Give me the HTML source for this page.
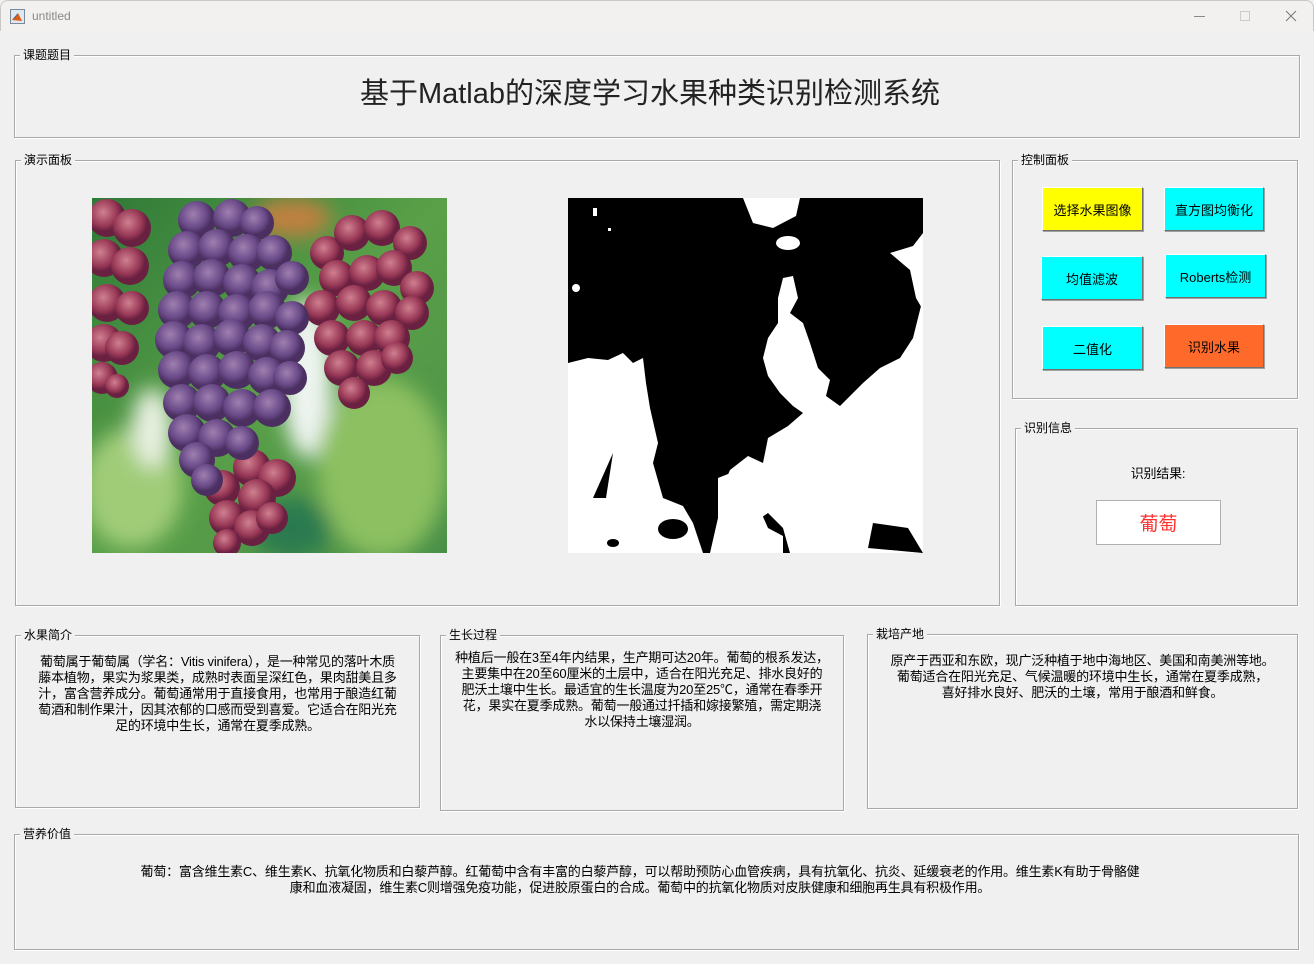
<!DOCTYPE html>
<html><head><meta charset="utf-8"><style>
*{margin:0;padding:0;box-sizing:border-box}
body{width:1314px;height:964px;background:#f0f0f0;position:relative;overflow:hidden;font-family:"Liberation Sans","Noto Sans CJK SC",sans-serif;font-size:12px;color:#000}
.tb{position:absolute;left:0;top:0;width:1314px;height:31px;background:#f3f1f0;border:1px solid #c8c8c8;border-bottom:none;border-radius:8px 8px 0 0}
.tb .t{position:absolute;left:31px;top:8px;color:#888;font-size:12px}
.g{position:absolute;border:1px solid #a9a9a9;box-shadow:1px 1px 0 #fff,inset 1px 1px 0 #fff}
.g .l{position:absolute;top:-9px;left:5px;background:#f0f0f0;padding:0 3px;font-size:12px;line-height:16px}
.txt{position:absolute;text-align:center;font-size:13px;line-height:16px;white-space:nowrap;letter-spacing:-0.2px}
.b{position:absolute;border:1px solid;border-color:#fff #707070 #707070 #fff;box-shadow:1px 1px 0 #a0a0a0;display:flex;align-items:center;justify-content:center;font-size:13px}
</style></head><body>
<div class="tb"><svg style="position:absolute;left:9px;top:8px" width="15" height="15"><rect x="0.5" y="0.5" width="14" height="14" fill="#dfe8f0" stroke="#7a8a9a"/><path d="M2 11 L8 4 L12 12 Z" fill="#e05a10"/><path d="M2 11 L6 8 L8 4Z" fill="#2a6ab0"/></svg><span class="t">untitled</span>
<div style="position:absolute;left:1193px;top:15px;width:11px;height:1px;background:#888"></div>
<div style="position:absolute;left:1239px;top:10px;width:10px;height:10px;border:1px solid #ccc"></div>
<svg style="position:absolute;left:1284px;top:9px" width="12" height="12"><path d="M1 1L11 11M11 1L1 11" stroke="#777" stroke-width="1"/></svg>
</div>

<div class="g" style="left:14px;top:55px;width:1286px;height:83px"><span class="l">课题题目</span></div>
<div class="txt" style="left:0;width:1300px;top:76px;font-size:29px;line-height:36px;color:#222;letter-spacing:0">基于Matlab的深度学习水果种类识别检测系统</div>

<div class="g" style="left:15px;top:160px;width:985px;height:446px"><span class="l">演示面板</span></div>
<svg style="position:absolute;left:92px;top:198px" width="355" height="355" viewBox="0 0 355 355">
<defs>
<radialGradient id="gp" cx="0.4" cy="0.35"><stop offset="0" stop-color="#a080b0"/><stop offset="0.7" stop-color="#6a4a88"/><stop offset="1" stop-color="#4a2f60"/></radialGradient>
<radialGradient id="gr" cx="0.4" cy="0.35"><stop offset="0" stop-color="#d08090"/><stop offset="0.7" stop-color="#9a3a58"/><stop offset="1" stop-color="#6a2040"/></radialGradient>
<linearGradient id="bg" x1="0" y1="0" x2="1" y2="1"><stop offset="0" stop-color="#2f7a38"/><stop offset="0.5" stop-color="#5aa048"/><stop offset="1" stop-color="#4a9048"/></linearGradient>
<filter id="bl"><feGaussianBlur stdDeviation="10"/></filter>
</defs>
<rect width="355" height="355" fill="url(#bg)"/>
<g filter="url(#bl)">
<ellipse cx="215" cy="180" rx="25" ry="80" fill="#eef4f0"/>
<ellipse cx="290" cy="270" rx="65" ry="90" fill="#8cc060"/>
<ellipse cx="40" cy="290" rx="50" ry="60" fill="#a0cc78"/>
<ellipse cx="60" cy="230" rx="20" ry="40" fill="#e8f0e0"/>
<ellipse cx="200" cy="330" rx="40" ry="30" fill="#2a7a50"/>
<ellipse cx="200" cy="20" rx="40" ry="20" fill="#c08040"/>
</g>
<g fill="url(#gr)">
<circle cx="15" cy="20" r="19"/><circle cx="40" cy="30" r="19"/><circle cx="12" cy="60" r="19"/><circle cx="38" cy="68" r="19"/><circle cx="15" cy="105" r="19"/><circle cx="40" cy="110" r="17"/><circle cx="12" cy="145" r="19"/><circle cx="30" cy="150" r="17"/><circle cx="10" cy="180" r="16"/><circle cx="25" cy="188" r="12"/>
<circle cx="235" cy="55" r="17"/><circle cx="260" cy="35" r="18"/><circle cx="290" cy="30" r="18"/><circle cx="318" cy="45" r="17"/>
<circle cx="245" cy="80" r="18"/><circle cx="275" cy="75" r="18"/><circle cx="302" cy="70" r="18"/><circle cx="325" cy="90" r="17"/>
<circle cx="230" cy="110" r="18"/><circle cx="262" cy="105" r="18"/><circle cx="292" cy="110" r="18"/><circle cx="320" cy="115" r="17"/>
<circle cx="240" cy="140" r="18"/><circle cx="272" cy="140" r="18"/><circle cx="300" cy="140" r="18"/>
<circle cx="250" cy="170" r="18"/><circle cx="282" cy="170" r="18"/><circle cx="305" cy="160" r="16"/>
<circle cx="262" cy="195" r="16"/>
<circle cx="160" cy="270" r="19"/><circle cx="185" cy="280" r="19"/><circle cx="130" cy="290" r="18"/><circle cx="165" cy="300" r="19"/><circle cx="135" cy="320" r="18"/><circle cx="160" cy="330" r="18"/><circle cx="180" cy="320" r="16"/><circle cx="135" cy="345" r="14"/>
</g>
<g fill="url(#gp)">
<circle cx="105" cy="22" r="19"/><circle cx="140" cy="20" r="19"/><circle cx="165" cy="25" r="17"/>
<circle cx="95" cy="52" r="19"/><circle cx="125" cy="50" r="19"/><circle cx="155" cy="55" r="19"/><circle cx="182" cy="55" r="18"/>
<circle cx="90" cy="82" r="19"/><circle cx="120" cy="80" r="19"/><circle cx="150" cy="85" r="19"/><circle cx="178" cy="90" r="19"/><circle cx="200" cy="80" r="17"/>
<circle cx="85" cy="112" r="19"/><circle cx="115" cy="112" r="19"/><circle cx="145" cy="115" r="19"/><circle cx="175" cy="112" r="19"/><circle cx="200" cy="120" r="17"/>
<circle cx="82" cy="142" r="19"/><circle cx="110" cy="145" r="19"/><circle cx="140" cy="140" r="19"/><circle cx="170" cy="145" r="19"/><circle cx="195" cy="150" r="18"/>
<circle cx="85" cy="172" r="19"/><circle cx="115" cy="175" r="19"/><circle cx="145" cy="172" r="19"/><circle cx="175" cy="178" r="19"/><circle cx="198" cy="180" r="17"/>
<circle cx="90" cy="205" r="19"/><circle cx="120" cy="205" r="19"/><circle cx="150" cy="210" r="19"/><circle cx="180" cy="210" r="19"/>
<circle cx="95" cy="235" r="19"/><circle cx="125" cy="240" r="19"/><circle cx="150" cy="245" r="17"/>
<circle cx="105" cy="262" r="18"/><circle cx="115" cy="282" r="16"/>
</g>
</svg>

<svg style="position:absolute;left:568px;top:198px" width="355" height="355" viewBox="0 0 355 355">
<rect width="355" height="355" fill="#000"/>
<g fill="#fff">
<path d="M0 165 L20 160 L40 162 L55 155 L65 165 L75 160 L78 185 L82 210 L90 245 L85 265 L95 300 L115 308 L125 325 L135 355 L0 355Z"/>
<path d="M200 140 L210 125 L210 100 L215 80 L225 78 L230 100 L222 115 L235 125 L242 145 L250 170 L262 182 L258 198 L272 208 L295 185 L312 170 L332 160 L345 140 L355 100 L355 355 L222 355 L215 330 L200 315 L178 330 L165 300 L152 295 L162 272 L180 258 L195 265 L200 240 L220 228 L235 215 L225 208 L212 195 L200 178 L195 160Z"/>
<path d="M175 0 L232 0 L228 18 L205 30 L185 25Z"/>
<path d="M322 55 L345 48 L355 35 L355 112 L348 100 L342 72Z"/>
<path d="M150 280 L175 270 L195 282 L200 300 L192 312 L200 330 L215 338 L215 355 L142 355 L150 320Z"/>
</g>
<g fill="#000">
<ellipse cx="105" cy="331" rx="15" ry="10"/><ellipse cx="45" cy="345" rx="6" ry="4"/><path d="M25 300 L45 255 L38 300Z"/><path d="M300 350 L305 325 L340 330 L355 355Z"/>
</g>
<g fill="#fff"><ellipse cx="220" cy="45" rx="12" ry="7"/><ellipse cx="8" cy="90" rx="4" ry="4"/><rect x="25" y="10" width="4" height="8"/><rect x="40" y="30" width="3" height="3"/></g>
</svg>

<div class="g" style="left:1012px;top:160px;width:286px;height:239px"><span class="l">控制面板</span></div>
<div class="b" style="left:1042px;top:187px;width:101px;height:44px;background:#ffff00">选择水果图像</div>
<div class="b" style="left:1164px;top:187px;width:100px;height:44px;background:#00ffff">直方图均衡化</div>
<div class="b" style="left:1041px;top:256px;width:102px;height:44px;background:#00ffff">均值滤波</div>
<div class="b" style="left:1165px;top:254px;width:101px;height:44px;background:#00ffff">Roberts检测</div>
<div class="b" style="left:1042px;top:326px;width:101px;height:44px;background:#00ffff">二值化</div>
<div class="b" style="left:1164px;top:324px;width:100px;height:44px;background:#ff6a2a">识别水果</div>

<div class="g" style="left:1015px;top:428px;width:283px;height:178px"><span class="l">识别信息</span></div>
<div class="txt" style="left:1096px;width:124px;top:466px;font-size:13px">识别结果:</div>
<div style="position:absolute;left:1096px;top:500px;width:125px;height:45px;background:#fff;border:1px solid #b0b0b0;color:#ff3030;font-size:19px;display:flex;align-items:center;justify-content:center">葡萄</div>

<div class="g" style="left:15px;top:635px;width:405px;height:173px"><span class="l">水果简介</span></div>
<div class="txt" style="left:15px;width:405px;top:654px">葡萄属于葡萄属（学名：Vitis vinifera），是一种常见的落叶木质<br>藤本植物，果实为浆果类，成熟时表面呈深红色，果肉甜美且多<br>汁，富含营养成分。葡萄通常用于直接食用，也常用于酿造红葡<br>萄酒和制作果汁，因其浓郁的口感而受到喜爱。它适合在阳光充<br>足的环境中生长，通常在夏季成熟。</div>

<div class="g" style="left:440px;top:635px;width:404px;height:176px"><span class="l">生长过程</span></div>
<div class="txt" style="left:440px;width:404px;top:650px">种植后一般在3至4年内结果，生产期可达20年。葡萄的根系发达，<br>主要集中在20至60厘米的土层中，适合在阳光充足、排水良好的<br>肥沃土壤中生长。最适宜的生长温度为20至25℃，通常在春季开<br>花，果实在夏季成熟。葡萄一般通过扦插和嫁接繁殖，需定期浇<br>水以保持土壤湿润。</div>

<div class="g" style="left:867px;top:634px;width:431px;height:175px"><span class="l">栽培产地</span></div>
<div class="txt" style="left:867px;width:431px;top:653px">原产于西亚和东欧，现广泛种植于地中海地区、美国和南美洲等地。<br>葡萄适合在阳光充足、气候温暖的环境中生长，通常在夏季成熟，<br>喜好排水良好、肥沃的土壤，常用于酿酒和鲜食。</div>

<div class="g" style="left:14px;top:834px;width:1285px;height:116px"><span class="l">营养价值</span></div>
<div class="txt" style="left:0;width:1280px;top:864px">葡萄：富含维生素C、维生素K、抗氧化物质和白藜芦醇。红葡萄中含有丰富的白藜芦醇，可以帮助预防心血管疾病，具有抗氧化、抗炎、延缓衰老的作用。维生素K有助于骨骼健<br>康和血液凝固，维生素C则增强免疫功能，促进胶原蛋白的合成。葡萄中的抗氧化物质对皮肤健康和细胞再生具有积极作用。</div>
</body></html>
